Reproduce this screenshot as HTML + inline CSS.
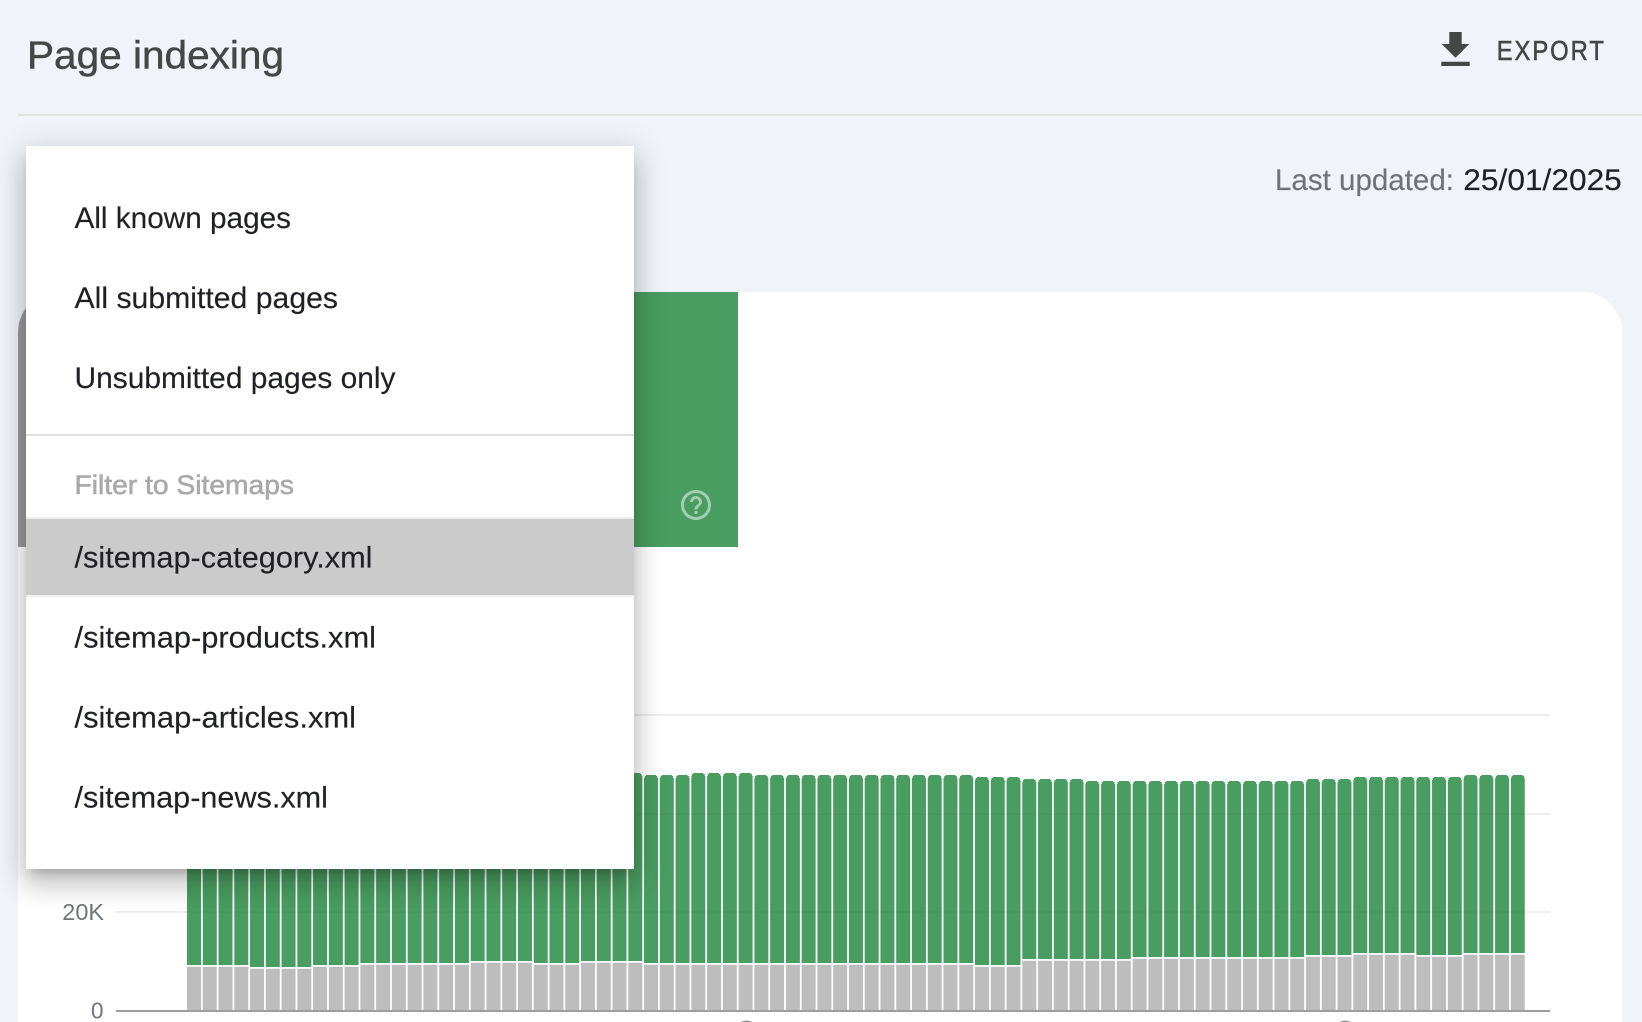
<!DOCTYPE html>
<html lang="en">
<head>
<meta charset="utf-8">
<title>Page indexing</title>
<style>
html,body{margin:0;padding:0;width:1642px;height:1022px;overflow:hidden;background:#f0f4f9}
body{position:relative;font-family:"Liberation Sans",Arial,sans-serif}
.abs{position:absolute}
svg{display:block;overflow:hidden}
svg text{font-family:"Liberation Sans",Arial,sans-serif}
#hr{left:18px;top:114px;width:1624px;height:2px;background:#e2e4e2}
#card{left:18px;top:292px;width:1604px;height:730px;background:#fff;border-radius:40px 40px 0 0;overflow:hidden}
#grayb{left:0;top:0;width:8px;height:255px;background:#9b9b9b}
#greenb{left:8px;top:0;width:712px;height:255px;background:#499d60}
#panel{left:26px;top:146px;width:608px;height:723px;background:#fff;box-shadow:0 8px 10px -5px rgba(0,0,0,.2),0 16px 24px 2px rgba(0,0,0,.14),0 6px 30px 5px rgba(0,0,0,.12)}
#sep{left:0;top:288px;width:608px;height:2px;background:#e0e0e0}
#sel{left:0;top:371px;width:608px;height:80px;background:#cbcbcb;border-top:2px solid #efefef;border-bottom:2px solid #efefef;box-sizing:border-box}
</style>
</head>
<body>
<svg class="abs" style="left:0;top:0" width="1642" height="110" viewBox="0 0 1642 110">
<text x="27" y="68.3" font-size="39" fill="#444746" stroke="#444746" stroke-width=".45" textLength="257" lengthAdjust="spacingAndGlyphs">Page indexing</text>
<path fill="#444746" d="M1449.3 32h12.4v12h7.6l-13.8 13.7-13.8-13.7h7.6zM1441.3 61.7h28.4V66h-28.4z"/>
<text transform="translate(1496.7 60) scale(.85 1)" font-size="28" letter-spacing="2.3" fill="#444746" stroke="#444746" stroke-width=".6">EXPORT</text>
</svg>
<div id="hr" class="abs"></div>
<svg class="abs" style="left:1260px;top:160px" width="382" height="40" viewBox="1260 160 382 40">
<text x="1275" y="190" font-size="30" fill="#6f7378" stroke="#6f7378" stroke-width=".15" textLength="179" lengthAdjust="spacingAndGlyphs">Last updated:</text>
<text x="1463.3" y="190" font-size="30" fill="#202124" stroke="#202124" stroke-width=".15" textLength="158.5" lengthAdjust="spacingAndGlyphs">25/01/2025</text>
</svg>

<div id="card" class="abs">
  <div id="grayb" class="abs"></div>
  <div id="greenb" class="abs"></div>
</div>
<svg class="abs" style="left:678px;top:487px" width="36" height="36" viewBox="0 0 24 24"><path fill="#fff" fill-opacity=".5" d="M11 18h2v-2h-2v2zm1-16C6.48 2 2 6.48 2 12s4.48 10 10 10 10-4.48 10-10S17.52 2 12 2zm0 18c-4.41 0-8-3.59-8-8s3.59-8 8-8 8 3.59 8 8-3.59 8-8 8zm0-14c-2.21 0-4 1.79-4 4h2c0-1.1.9-2 2-2s2 .9 2 2c0 2-3 1.75-3 5h2c0-2.25 3-2.5 3-5 0-2.21-1.79-4-4-4z"/></svg>

<svg class="abs" style="left:0;top:560px" width="1642" height="462" viewBox="0 560 1642 462">
<path stroke="#eeeeee" stroke-width="2" fill="none" d="M116 715H1550M116 814H1550M116 912H1550"/>
<line x1="116" x2="1550" y1="1011" y2="1011" stroke="#9e9e9e" stroke-width="2"/>
<text x="62.3" y="920" font-size="23" fill="#70757a" textLength="41.7" lengthAdjust="spacingAndGlyphs">20K</text>
<text x="91" y="1018.5" font-size="23" fill="#70757a" textLength="12.5" lengthAdjust="spacingAndGlyphs">0</text>
<path fill="#bdbdbd" d="M187 966.7H250.04V968.7H313.08V966.7H360.36V964.7H470.68V962.7H533.72V964.7H581V962.7H644.04V964.7H975V966.7H1022.28V960.7H1132.6V958.7H1305.96V956.7H1353.24V954.7H1416.28V956.7H1463.56V954.7H1524.84V1010H187Z"/>
<path fill="#499d60" d="M187 776H644.04V778H691.32V776H754.36V778H975V780H1022.28V782H1085.32V784H1305.96V782H1353.24V780H1463.56V778H1524.84V953H1463.56V955H1416.28V953H1353.24V955H1305.96V957H1132.6V959H1022.28V965H975V963H644.04V961H581V963H533.72V961H470.68V963H360.36V965H313.08V967H250.04V965H187Z"/>
<line x1="201" x2="1525" y1="885" y2="885" stroke="#fff" stroke-width="250" stroke-dasharray="1.76 14"/>
<path fill="none" stroke="#499d60" stroke-width="2" stroke-dasharray="12.6 3.16" d="M628.98 775H641.58M692.02 775H751.9M644.74 777H688.86M755.06 777H972.54M1464.26 777H1524.14M975.7 779H1019.82M1353.94 779H1461.1M1022.98 781H1082.86M1306.66 781H1350.78M1086.02 783H1303.5"/>
<path fill="none" stroke="#499d60" stroke-width="1" stroke-dasharray="10 5.76" d="M630.28 773.5H640.28M693.32 773.5H750.6M646.04 775.5H687.56M756.36 775.5H971.24M1465.56 775.5H1522.84M977 777.5H1018.52M1355.24 777.5H1459.8M1024.28 779.5H1081.56M1307.96 779.5H1349.48M1087.32 781.5H1302.2"/>
<path stroke="#000" stroke-opacity=".03" stroke-width="2" fill="none" d="M187 814H1525M187 912H1525"/>
<ellipse cx="746.7" cy="1023.5" rx="6.3" ry="3" fill="#9a9a9a"/>
<ellipse cx="1345" cy="1023.5" rx="6.3" ry="3" fill="#9a9a9a"/>
</svg>

<div id="panel" class="abs">
  <div id="sep" class="abs"></div>
  <div id="sel" class="abs"></div>
  <svg class="abs" style="left:0;top:0" width="608" height="723" viewBox="26 146 608 723">
    <g font-size="29.5" fill="#202124" stroke="#202124" stroke-width=".15">
      <text x="74.5" y="228" textLength="216.5" lengthAdjust="spacingAndGlyphs">All known pages</text>
      <text x="74.5" y="308" textLength="263.5" lengthAdjust="spacingAndGlyphs">All submitted pages</text>
      <text x="74.5" y="388" textLength="321" lengthAdjust="spacingAndGlyphs">Unsubmitted pages only</text>
      <text x="74.5" y="567.5" textLength="298" lengthAdjust="spacingAndGlyphs">/sitemap-category.xml</text>
      <text x="74.5" y="647.5" textLength="301.5" lengthAdjust="spacingAndGlyphs">/sitemap-products.xml</text>
      <text x="74.5" y="727.5" textLength="281.5" lengthAdjust="spacingAndGlyphs">/sitemap-articles.xml</text>
      <text x="74.5" y="807.5" textLength="253.5" lengthAdjust="spacingAndGlyphs">/sitemap-news.xml</text>
    </g>
    <text x="74.5" y="494" font-size="27" fill="#a9a9a9" stroke="#a9a9a9" stroke-width=".6" textLength="219.5" lengthAdjust="spacingAndGlyphs">Filter to Sitemaps</text>
  </svg>
</div>
</body>
</html>
